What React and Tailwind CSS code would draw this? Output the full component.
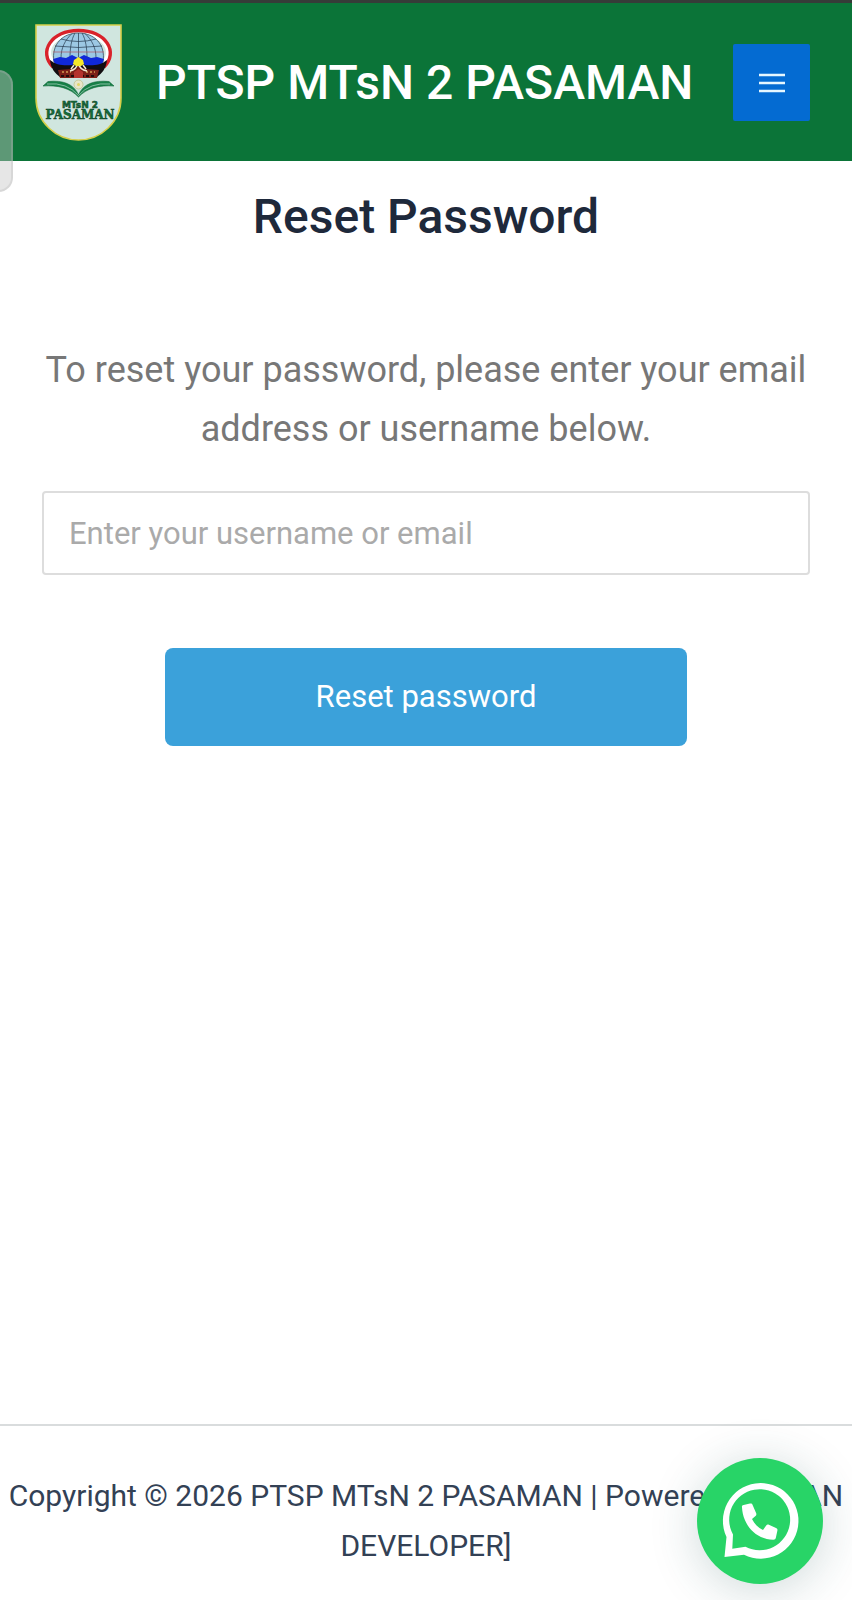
import { useState } from 'react'

function SchoolLogo() {
  return (
    <svg viewBox="0 0 87 117" className="h-[117px] w-[87px]" role="img" aria-label="Logo MTsN 2 Pasaman">
      <path d="M1 1H86V74C86 98 66 116 43.500 116S1 98 1 74Z" fill="#d0e6df" stroke="#d6cf4a" strokeWidth="1.600" />

      {/* red and white ring */}
      <path d="M20 41C6 26 19 9 43.500 9S81 26 67 41" fill="none" stroke="#fff" strokeWidth="4" />
      <path d="M18 43C3 28 16 6.500 43.500 6.500S84 28 69 43" fill="none" stroke="#d9222a" strokeWidth="3.400" />

      {/* globe */}
      <path d="M19 38C16 20 28 9 43.500 9S71 20 68 38Z" fill="#9cc8e4" />
      <g fill="none" stroke="#24384c" strokeWidth="0.700">
        <path d="M19 38C16 20 28 9 43.500 9S71 20 68 38" />
        <path d="M43.500 9V34M37 9.500C30 16 26 24 26 34M50 9.500C57 16 61 24 61 34M40 9C36 16 35 25 35 34M47 9C51 16 52 25 52 34" />
        <path d="M26 15Q43.500 20 61 15M20 22Q43.500 25 67 22" />
      </g>
      <path d="M18 28H69" stroke="#b25563" strokeWidth="0.700" />

      {/* mountains */}
      <path d="M18 35L25 33L31 34L37 31L43 34L49 31L56 34L62 33L69 35L66 44H21Z" fill="#1028d8" />

      {/* rumah gadang */}
      <path d="M15 36C21 41 29 42 37 41L43.500 37L50 41C58 42 66 41 72 36C71 45 67 49 62 53H25C20 49 16 45 15 36Z" fill="#120d10" />
      <path d="M23 46L37 45L43.500 42L50 45L64 46L62 54H25Z" fill="#7c2018" />
      <path d="M27 48H36M51 48H60" stroke="#d49b52" strokeWidth="1.600" strokeDasharray="2 2" />
      <path d="M26 52H61" stroke="#260c0c" strokeWidth="2" strokeDasharray="3 2" />
      <path d="M39 54V48L43.500 45L48 48V54Z" fill="#b5332d" />
      <path d="M35 47C40 46 42 43 43 39C44 43 47 46 52 47M39 41L36 45M48 41L51 45" fill="none" stroke="#f1ead5" strokeWidth="1.500" />
      <path d="M43.500 33L48 36L49 40L46 42H41L38 40L39 36Z" fill="#f5e72b" />

      {/* book */}
      <path d="M13 57.500C28 56 39 60 43.500 71C48 60 59 56 74 57.500L79 62C64 61 52 64 43.500 73C35 64 23 61 8 62Z" fill="#168047" stroke="#0f6838" strokeWidth="0.600" />
      <path d="M12 60Q32 58 43.500 71.500Q55 58 75 60" fill="none" stroke="#d0e6df" strokeWidth="0.600" />
      <circle cx="43.500" cy="60.500" r="4.500" fill="#e8e6c8" stroke="#b9bd87" strokeWidth="0.700" />
      <circle cx="43.500" cy="60.500" r="1.500" fill="#e2d667" />

      <g fill="#12703a" stroke="#123f26" strokeWidth="0.500" textAnchor="middle" fontWeight="700">
        <text x="45" y="84" fontSize="9" fontFamily="DejaVu Sans, sans-serif">MTsN 2</text>
        <text x="45" y="95" fontSize="12" fontFamily="DejaVu Serif, serif">PASAMAN</text>
      </g>
    </svg>
  )
}

function WhatsAppIcon() {
  return (
    <svg viewBox="0 0 126 126" className="size-full" aria-hidden="true">
      <path
        fillRule="evenodd"
        fill="#fff"
        d="M27.500 99L29.500 79A37.800 37.800 0 1 1 47 96.800ZM35.300 90.800L48.500 88.700A30.500 30.500 0 1 0 36 76.500Z"
      />
      <path
        fill="#fff"
        d="M45 49.500C44.600 48 45.300 47.300 46.600 47L53 45.600C54.300 45.400 55.200 45.800 55.600 47L59.200 55.300C59.600 56.400 59.400 57.300 58.500 58L55 61C57.500 66 61 69.500 66 72L69.200 67.500C69.900 66.600 70.800 66.300 71.900 66.800L79 70C80.200 70.500 80.700 71.400 80.400 72.600L78.900 79.500C78.600 81 77.800 81.700 76.300 81.700C58.500 81.200 46 67 45 49.500Z"
      />
    </svg>
  )
}

export default function App() {
  const [login, setLogin] = useState('')
  const [menuOpen, setMenuOpen] = useState(false)

  const handleSubmit = (e) => {
    e.preventDefault()
  }

  return (
    <div className="flex min-h-screen flex-col bg-white font-['Roboto',sans-serif]">
      <header className="flex items-center justify-between border-t-3 border-[#363b38] bg-[#0b7438] pt-[21px] pr-[42px] pb-5 pl-[35px]">
        <a href="#" className="flex items-center gap-[34px] text-[48px] leading-[56px] font-medium text-white">
          <SchoolLogo />
          <span>PTSP MTsN 2 PASAMAN</span>
        </a>
        <button
          type="button"
          aria-label="Main menu"
          aria-expanded={menuOpen}
          onClick={() => setMenuOpen(!menuOpen)}
          className="flex size-[77px] shrink-0 items-center justify-center rounded-xs bg-[#046bd2]"
        >
          <svg viewBox="0 0 26 20" className="h-5 w-[26px]" aria-hidden="true">
            <path d="M0 2H26M0 10H26M0 18H26" stroke="#e6f7ff" strokeWidth="2.400" />
          </svg>
        </button>
      </header>

      <main className="flex-1 px-[42px] pt-7 text-center">
        <h1 className="text-[48px] leading-[56px] font-medium text-[#1e293b]">Reset Password</h1>

        <form onSubmit={handleSubmit} className="mt-24 flex flex-col items-center">
          <label htmlFor="login" className="text-[36px] leading-[59px] text-[#777]">
            To reset your password, please enter your email address or username below.
          </label>
          <input
            id="login"
            type="text"
            placeholder="Enter your username or email"
            value={login}
            onChange={(e) => setLogin(e.target.value)}
            className="mt-8 h-[84px] w-full rounded-sm border-2 border-[#ddd] px-[25px] text-[31px] text-[#666] placeholder:text-[#aaa] focus:outline-none"
          />
          <button type="submit" className="mt-[73px] h-[98px] w-[68%] rounded-lg bg-[#3ba1da] text-[31px] text-white">
            Reset password
          </button>
        </form>
      </main>

      <footer className="border-t-2 border-[#d9dcdd] pt-[45px] pb-[29px] text-center text-[30px] leading-[50px] text-[#334155]">
        Copyright © 2026 PTSP MTsN 2 PASAMAN | Powered by [MAN DEVELOPER]
      </footer>

      {/* edge panel handle */}
      <div className="fixed top-[70px] -left-4 h-[122px] w-[29px] rounded-2xl border-2 border-[#b5b5b5]/30 bg-[#c6c6c6]/44" />

      <a
        href="#whatsapp"
        aria-label="WhatsApp"
        className="fixed right-[29px] bottom-4 size-[126px] rounded-full bg-[#28d467] shadow-[0_6px_48px_rgba(30,80,80,0.22)]"
      >
        <WhatsAppIcon />
      </a>
    </div>
  )
}
